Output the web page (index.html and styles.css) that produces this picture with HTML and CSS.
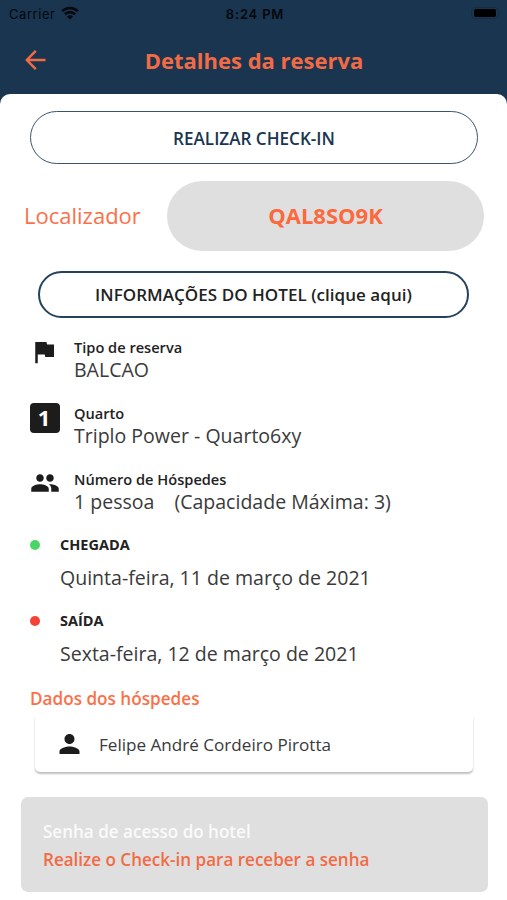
FILE: index.html
```html
<!DOCTYPE html>
<html lang="pt-BR">
<head>
<meta charset="utf-8">
<title>Detalhes da reserva</title>
<link rel="stylesheet" href="styles.css">
</head>
<body>
<div class="status">
  <div class="status-left"><span class="carrier">Carrier</span>
    <svg class="wifi" viewBox="0 0 18 14"><path d="M1.200 5.200C5.500.9 12.500.9 16.800 5.200" /><path d="M4 8.200c2.800-2.700 7.200-2.700 10 0"/><path class="solid" d="M6 10.400q3-2.500 6 0l-3 3z"/></svg>
  </div>
  <span class="clock">8:24 PM</span>
  <div class="battery"><span class="battery-level"></span></div>
</div>
<header class="bar">
  <svg class="back" viewBox="0 0 20 20"><path d="M20 10H1.500M10.300 .8L1.300 10l9 9.200"/></svg>
  <h1 class="title">Detalhes da reserva</h1>
</header>
<main class="sheet">
  <button class="checkin">REALIZAR CHECK-IN</button>
  <div class="locator"><span class="locator-label">Localizador</span><div class="locator-code">QAL8SO9K</div></div>
  <button class="hotel">INFORMAÇÕES DO HOTEL (clique aqui)</button>
  <section class="facts">
    <div class="fact">
      <svg class="icon flag" viewBox="0 0 24 24"><path d="M14.400 6L14 4H5v17h2v-7h5.600l.4 2h7V6z"/></svg>
      <div><div class="label">Tipo de reserva</div><div class="value">BALCAO</div></div>
    </div>
    <div class="fact">
      <div class="one">1</div>
      <div><div class="label">Quarto</div><div class="value">Triplo Power - Quarto6xy</div></div>
    </div>
    <div class="fact">
      <svg class="icon people" viewBox="0 0 24 24"><path d="M16 11c1.660 0 2.990-1.340 2.990-3S17.660 5 16 5s-3 1.340-3 3 1.340 3 3 3zm-8 0c1.660 0 2.990-1.340 2.990-3S9.660 5 8 5 5 6.340 5 8s1.340 3 3 3zm0 2c-2.330 0-7 1.170-7 3.500V19h14v-2.500c0-2.330-4.670-3.500-7-3.500zm8 0c-.29 0-.62.02-.97.05 1.160.84 1.970 1.970 1.970 3.450V19h6v-2.500c0-2.330-4.670-3.500-7-3.500z"/></svg>
      <div><div class="label">Número de Hóspedes</div><div class="value guests-count"><span>1 pessoa</span><span>(Capacidade Máxima: 3)</span></div></div>
    </div>
  </section>
  <section class="dates">
    <div class="date"><i class="dot in"></i><div><div class="date-label">CHEGADA</div><div class="value">Quinta-feira, 11 de março de 2021</div></div></div>
    <div class="date"><i class="dot out"></i><div><div class="date-label">SAÍDA</div><div class="value">Sexta-feira, 12 de março de 2021</div></div></div>
  </section>
  <h2 class="guests-title">Dados dos hóspedes</h2>
  <div class="guests"><div class="guest">
    <svg class="person" viewBox="4 4 16 16"><path d="M12 12c2.210 0 4-1.790 4-4s-1.790-4-4-4-4 1.790-4 4 1.790 4 4 4zm0 2c-2.670 0-8 1.340-8 4v2h16v-2c0-2.660-5.330-4-8-4z"/></svg>
    <span>Felipe André Cordeiro Pirotta</span>
  </div></div>
  <div class="password"><div class="pw-title">Senha de acesso do hotel</div><div class="pw-text">Realize o Check-in para receber a senha</div></div>
</main>
</body>
</html>
```
FILE: styles.css
```css
* { box-sizing: border-box; }
body {
  margin: 0;
  height: 900px;
  overflow: hidden;
  background: #193550;
  color: #222;
  font-family: "Open Sans", "Noto Sans", sans-serif;
}
.status {
  display: grid;
  grid-template-columns: 1fr auto 1fr;
  align-items: center;
  height: 27px;
  padding: 0 8px 0 9px;
  color: #05080c;
  font: 13px/16px Inter, "Liberation Sans", sans-serif;
}
.status-left { display: flex; align-items: center; gap: 6px; }
.carrier { letter-spacing: .55px; }
.wifi { width: 18px; height: 14px; margin-top: -2px; fill: none; stroke: #05080c; stroke-width: 2.6; }
.wifi .solid { fill: #05080c; stroke: none; }
.clock { margin-right: -2px; font-weight: 600; letter-spacing: .8px; }
.battery {
  justify-self: end;
  width: 28px;
  height: 12px;
  margin: -2px 0 0;
  padding: 1px 2px;
  border: 1px solid #152e45;
  border-radius: 4px;
}
.battery-level { display: block; width: 22px; height: 8px; border-radius: 2px; background: #000; }
.bar { display: flex; align-items: center; height: 67px; padding: 0 25px; }
.back { width: 21px; height: 20px; margin-top: -2px; fill: none; stroke: #f26b45; stroke-width: 2.4; }
.title { flex: 1; margin: -2px 20px 0 0; color: #f26b45; font-size: 22px; line-height: 30px; font-weight: 700; text-align: center; }
.sheet { height: 806px; padding: 17px 0 0; border-radius: 10px 10px 0 0; background: #fff; }
button { display: block; padding: 0; background: #fff; font-family: inherit; }
.checkin {
  width: 448px;
  height: 53px;
  margin-left: 30px;
  padding-top: 1px;
  border: 1.500px solid #3a546b;
  border-radius: 27px;
  color: #193550;
  font-size: 17.100px;
  font-weight: 600;
}
.locator { display: flex; align-items: center; justify-content: space-between; height: 70px; margin: 17px 23px 0 24px; }
.locator-label { margin-top: -2px; color: #fc7048; font-size: 22px; line-height: 30px; }
.locator-code {
  display: flex;
  align-items: center;
  justify-content: center;
  width: 317px;
  height: 70px;
  padding-bottom: 2px;
  border-radius: 35px;
  background: #dfdfdf;
  color: #fb693c;
  font-size: 22px;
  font-weight: 700;
}
.hotel {
  width: 431px;
  height: 47px;
  margin: 20px 0 0 38px;
  border: 2px solid #24425d;
  border-radius: 24px;
  color: #222;
  font-size: 17px;
  letter-spacing: .04px;
  font-weight: 600;
}
.facts { padding: 20px 30px 0; }
.fact { display: grid; grid-template-columns: 44px 1fr; height: 66px; }
.icon { width: 30px; height: 30px; fill: #1c1c1c; }
.flag { margin: -1px 0 0 -1px; }
.people { margin-top: -2px; }
.one {
  width: 30px;
  height: 30px;
  margin-top: -1px;
  padding-right: 2px;
  border-radius: 4px;
  background: #1c1c1c;
  color: #fff;
  font-size: 22px;
  line-height: 29px;
  font-weight: 700;
  text-align: center;
}
.label { margin-bottom: 2px; font-size: 14.600px; line-height: 18px; font-weight: 600; }
.value { width: max-content; color: #3a3a3a; font-size: 19.550px; line-height: 24px; }
.guests-count { display: flex; gap: 20px; }
.dates { padding: 0 30px; }
.date { display: grid; grid-template-columns: 30px 1fr; height: 76px; }
.dot { width: 10px; height: 10px; margin-top: 4px; border-radius: 50%; }
.in { background: #4cd567; }
.out { background: #f44336; }
.date-label { width: max-content; margin: -1px 0 11px; font-size: 14.500px; line-height: 20px; font-weight: 700; }
.guests-title { margin: -1px 0 0 30px; color: #fc7048; font-size: 17.150px; line-height: 24px; font-weight: 600; }
.guests { overflow: hidden; margin: 6px 29px 0 30px; padding: 0 5px 5px; }
.guest {
  display: flex;
  align-items: center;
  gap: 19px;
  height: 55px;
  padding-left: 24px;
  border-radius: 0 0 5px 5px;
  box-shadow: 0 1.500px 2px rgba(0, 0, 0, .25);
  color: #3a3a3a;
  font-size: 17.100px;
}
.person { width: 21px; height: 20px; margin-top: -2px; fill: #1c1c1c; }
.password {
  height: 95px;
  margin: 20px 19px 0 21px;
  padding: 21px 22px;
  border-radius: 7px;
  background: #dfdfdf;
  font-size: 17.060px;
  line-height: 28px;
  font-weight: 600;
}
.pw-title { color: #fafafa; }
.pw-text { color: #f26b45; }
```
